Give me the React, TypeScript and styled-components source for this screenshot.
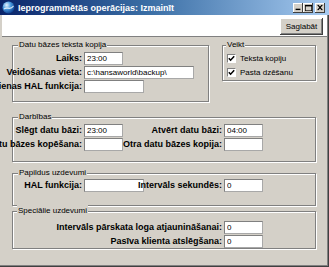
import React from 'react';
import styled, { createGlobalStyle } from 'styled-components';

const Global = createGlobalStyle`
   html, body {
      margin: 0;
      padding: 0;
      overflow: hidden;
      background: #d4d0c8;
   }
   * {
      box-sizing: border-box;
   }
`;

const FONT = `'Liberation Sans', Arial, sans-serif`;

function App() {
   return (
      <>
         <Global />
         <Window>
            <TitleBar>
               <AppIcon />
               <Title>Ieprogrammētās operācijas: Izmainīt</Title>
               <Caption>
                  <CapButton>
                     <svg width='8' height='7' viewBox='0 0 8 7'>
                        <rect x='1' y='5' width='6' height='2' fill='#000' />
                     </svg>
                  </CapButton>
                  <CapButton>
                     <svg width='9' height='8' viewBox='0 0 9 8'>
                        <rect x='0.5' y='0.5' width='8' height='7' fill='none' stroke='#000' />
                        <rect x='0' y='0' width='9' height='2' fill='#000' />
                     </svg>
                  </CapButton>
                  <CapButton $gap>
                     <svg width='8' height='7' viewBox='0 0 8 7'>
                        <path d='M1 0 L7 7 M7 0 L1 7' stroke='#000' strokeWidth='1.6' />
                     </svg>
                  </CapButton>
               </Caption>
            </TitleBar>

            <Toolbar>
               <Button>Saglabāt</Button>
            </Toolbar>

            <Body>
               <TopRow>
                  <Group $w={197} $h={57} $pt={5}>
                     <Legend>Datu bāzes teksta kopija</Legend>
                     <Row>
                        <Label $w={69}>Laiks:</Label>
                        <Input $w={39} defaultValue='23:00' />
                     </Row>
                     <Row>
                        <Label $w={69}>Veidošanas vieta:</Label>
                        <Input $w={110} defaultValue='c:\hansaworld\backup\' />
                     </Row>
                     <Row>
                        <Label $w={69}>dienas HAL funkcija:</Label>
                        <Input $w={60} defaultValue='' />
                     </Row>
                  </Group>

                  <Group $w={94} $h={36} $pt={5} $pl={4}>
                     <Legend $left={3}>Veikt</Legend>
                     <CheckRow>
                        <CheckBox />
                        Teksta kopiju
                     </CheckRow>
                     <CheckRow>
                        <CheckBox />
                        Pasta dzēšanu
                     </CheckRow>
                  </Group>
               </TopRow>

               <Group $w={304} $h={45} $pt={5} $mt={15}>
                  <Legend>Darbības</Legend>
                  <Row>
                     <Label $w={69}>Slēgt datu bāzi:</Label>
                     <Input $w={39} defaultValue='23:00' />
                     <Label $w={99}>Atvērt datu bāzi:</Label>
                     <Input $w={39} defaultValue='04:00' />
                  </Row>
                  <Row>
                     <Label $w={69}>Datu bāzes kopēšana:</Label>
                     <Input $w={39} defaultValue='' />
                     <Label $w={99}>Otra datu bāzes kopija:</Label>
                     <Input $w={39} defaultValue='' />
                  </Row>
               </Group>

               <Group $w={304} $h={33} $pt={4} $mt={11}>
                  <Legend>Papildus uzdevumi</Legend>
                  <Row>
                     <Label $w={69}>HAL funkcija:</Label>
                     <Input $w={60} defaultValue='' />
                     <Label $w={78}>Intervāls sekundēs:</Label>
                     <Input $w={39} defaultValue='0' />
                  </Row>
               </Group>

               <Group $w={304} $h={38} $pt={8} $mt={5}>
                  <Legend $left={4}>Speciālie uzdevumi</Legend>
                  <Row>
                     <Label $w={209}>Intervāls pārskata loga atjaunināšanai:</Label>
                     <Input $w={39} defaultValue='0' />
                  </Row>
                  <Row>
                     <Label $w={209}>Pasīva klienta atslēgšana:</Label>
                     <Input $w={39} defaultValue='0' />
                  </Row>
               </Group>
            </Body>
         </Window>
      </>
   );
}

function AppIcon() {
   return (
      <IconWrap>
         <svg width='13' height='13' viewBox='0 0 13 13'>
            <defs>
               <radialGradient id='globe' cx='0.35' cy='0.3' r='0.75'>
                  <stop offset='0' stopColor='#e8f4ff' />
                  <stop offset='0.45' stopColor='#4a9be0' />
                  <stop offset='1' stopColor='#0a3a8a' />
               </radialGradient>
            </defs>
            <circle cx='6.5' cy='6.5' r='6' fill='url(#globe)' />
            <path d='M2 8 C5 5, 8 10, 11.5 5' stroke='#ffffff' strokeWidth='1.2' fill='none' opacity='0.8' />
         </svg>
      </IconWrap>
   );
}

const Window = styled.div`
   width: 329px;
   height: 267px;
   display: flex;
   flex-direction: column;
   background: #d4d0c8;
   overflow: hidden;
   font-family: ${FONT};
   color: #000;
   box-shadow: inset -1px -1px 0 #404040, inset -2px -2px 0 #808080;
`;

const TitleBar = styled.div`
   height: 15px;
   flex-shrink: 0;
   display: flex;
   align-items: center;
   padding: 0 4px 0 2px;
   background: linear-gradient(to right, #0a246a 0%, #3a6ea5 45%, #a6caf0 100%);
`;

const IconWrap = styled.div`
   width: 13px;
   height: 13px;
   display: flex;
   margin-right: 3px;
`;

const Title = styled.span`
   flex: 1;
   color: #fff;
   font-weight: bold;
   font-size: 9px;
   white-space: nowrap;
`;

const Caption = styled.div`
   display: flex;
   align-items: center;
`;

const CapButton = styled.div<{ $gap?: boolean }>`
   width: 10px;
   height: 10px;
   margin-left: ${(p) => (p.$gap ? '2px' : '0')};
   background: #d4d0c8;
   display: flex;
   align-items: center;
   justify-content: center;
   box-shadow: inset -1px -1px 0 #404040, inset 1px 1px 0 #fff;
   svg {
      transform: scale(0.8);
   }
`;

const Toolbar = styled.div`
   height: 22px;
   flex-shrink: 0;
   margin: 0 2px 0 2px;
   padding: 3px 4px 0 0;
   display: flex;
   justify-content: flex-end;
   align-items: flex-start;
   background: #fff;
   border-bottom: 1px solid #808080;
`;

const Button = styled.div`
   width: 43px;
   height: 17px;
   display: flex;
   align-items: center;
   justify-content: center;
   font-size: 8px;
   background: #d4d0c8;
   box-shadow: inset -1px -1px 0 #404040, inset 1px 1px 0 #fff, inset -2px -2px 0 #808080;
`;

const Body = styled.div`
   padding: 8px 0 0 12px;
   display: flex;
   flex-direction: column;
   align-items: flex-start;
`;

const TopRow = styled.div`
   display: flex;
   gap: 13px;
   align-items: flex-start;
`;

const Group = styled.div<{ $w: number; $h: number; $pt: number; $mt?: number; $pl?: number }>`
   position: relative;
   flex-shrink: 0;
   width: ${(p) => p.$w}px;
   height: ${(p) => p.$h}px;
   margin-top: ${(p) => p.$mt || 0}px;
   padding: ${(p) => p.$pt}px 0 0 ${(p) => p.$pl || 0}px;
   border: 1px solid #808080;
   box-shadow: 1px 1px 0 #fff, inset 1px 1px 0 #fff;
   display: flex;
   flex-direction: column;
`;

const Legend = styled.span<{ $left?: number }>`
   position: absolute;
   top: -7px;
   left: ${(p) => p.$left ?? 5}px;
   padding: 0 1px;
   font-size: 8px;
   line-height: 12px;
   background: #d4d0c8;
   white-space: nowrap;
`;

const Row = styled.div`
   height: 14px;
   display: flex;
   align-items: center;
`;

const Label = styled.div<{ $w: number }>`
   width: ${(p) => p.$w}px;
   flex-shrink: 0;
   margin-right: 2px;
   display: flex;
   justify-content: flex-end;
   white-space: nowrap;
   font-weight: bold;
   font-size: 9px;
`;

const Input = styled.input<{ $w: number }>`
   width: ${(p) => p.$w}px;
   height: 13px;
   flex-shrink: 0;
   margin: 0;
   padding: 0 2px;
   font-family: ${FONT};
   font-size: 8px;
   color: #000;
   background: #fff;
   border: 1px solid #a8a8a8;
   border-top-color: #808080;
   border-left-color: #808080;
   outline: none;
`;

const CheckRow = styled.div`
   height: 14px;
   display: flex;
   align-items: center;
   gap: 4px;
   font-size: 8px;
   white-space: nowrap;
`;

function CheckBox() {
   return (
      <Box>
         <svg width='7' height='7' viewBox='0 0 7 7'>
            <path d='M0.8 3.2 L2.6 5.2 L6.2 1.2' stroke='#000' strokeWidth='1.5' fill='none' />
         </svg>
      </Box>
   );
}

const Box = styled.div`
   width: 9px;
   height: 9px;
   flex-shrink: 0;
   display: flex;
   align-items: center;
   justify-content: center;
   background: #fff;
   border: 1px solid #808080;
   border-right-color: #fff;
   border-bottom-color: #fff;
   box-shadow: 1px 1px 0 #d4d0c8;
`;

export default App;
